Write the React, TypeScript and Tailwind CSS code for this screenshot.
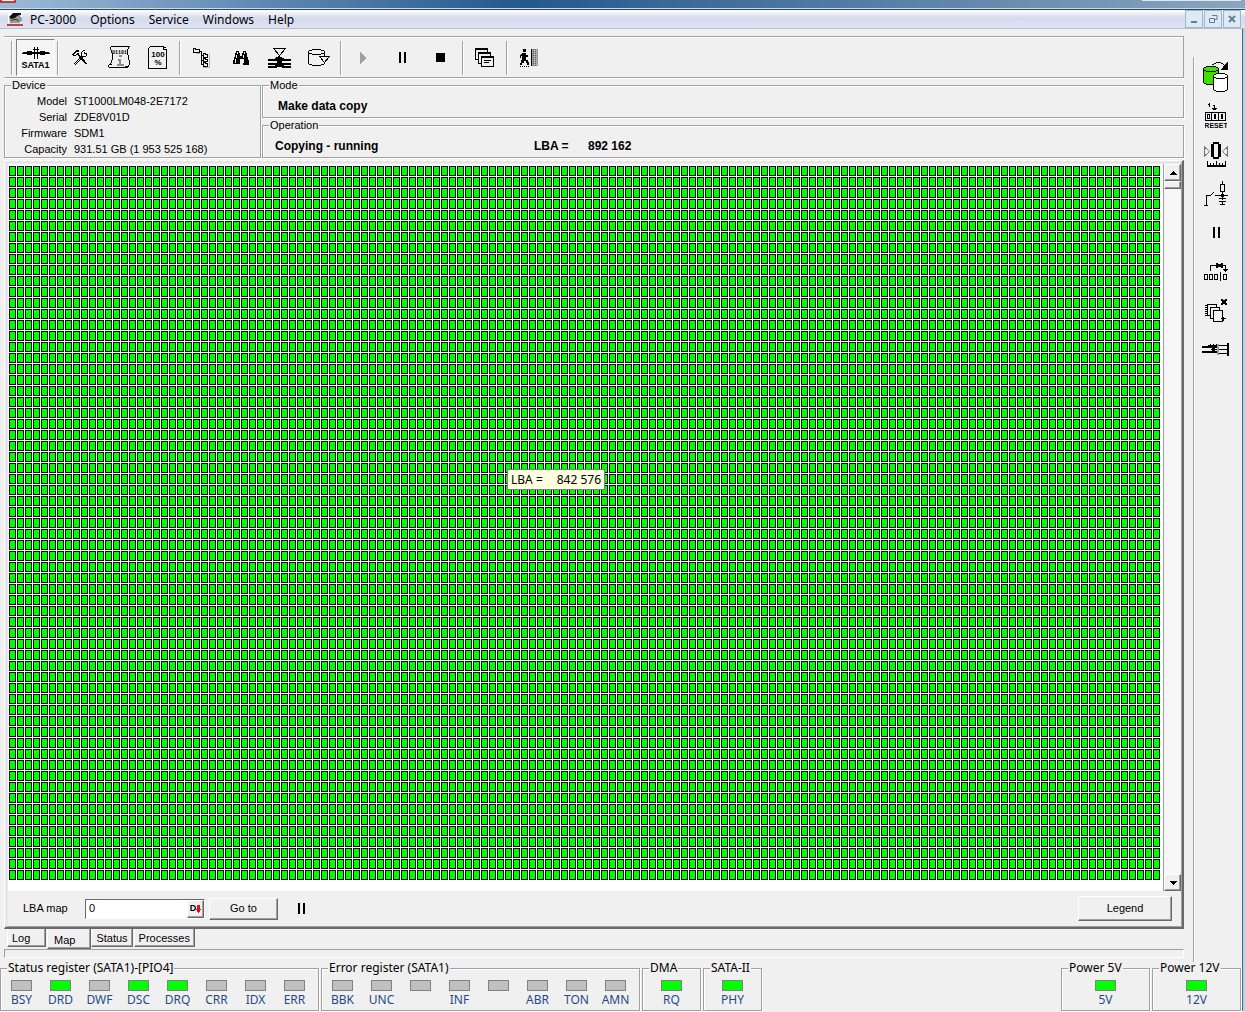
import { useState } from "react";
import type { ReactNode } from "react";

interface Led {
    label: string;
    on?: boolean;
}

const STATUS: Led[] = [
    { label: "BSY" },
    { label: "DRD", on: true },
    { label: "DWF" },
    { label: "DSC", on: true },
    { label: "DRQ", on: true },
    { label: "CRR" },
    { label: "IDX" },
    { label: "ERR" },
];

const ERRORS: Led[] = [
    { label: "BBK" },
    { label: "UNC" },
    { label: "" },
    { label: "INF" },
    { label: "" },
    { label: "ABR" },
    { label: "TON" },
    { label: "AMN" },
];

const DEVICE = [
    ["Model", "ST1000LM048-2E7172"],
    ["Serial", "ZDE8V01D"],
    ["Firmware", "SDM1"],
    ["Capacity", "931.51 GB (1 953 525 168)"],
];

function Icon({ w, h, children }: { w: number; h: number; children: ReactNode }) {
    return (
        <svg width={w} height={h} viewBox={`0 0 ${w} ${h}`} fill="none" stroke="#000" shapeRendering="crispEdges" aria-hidden="true">
            {children}
        </svg>
    );
}

const SataIcon = () => (
    <Icon w={28} h={12}>
        <path d="M0 6h28M5 4.5h5M18 4.5h5M5 7.5h5M18 7.5h5M12.5 0v12M15.5 0v12M11 2.5h6" />
        <path d="M1 5h26v2H1z" fill="#000" stroke="none" />
    </Icon>
);

const ToolsIcon = () => (
    <Icon w={16} h={16}>
        <path d="M5 4l9 10M6 4l9 10M10 6L2 14M11 7L3 15" />
        <path d="M0 4.5h2M1 3.5h2M2 2.5h2M3 1.5h4M4 .5h3M1 5.5h3M4 4.5h2M5 3.5h2" />
        <path d="M11 .5h2M10 1.5h1M9.5 2v4M10 6.5h4M14.5 4v2M12.5 2v2M13 3.5h2" />
    </Icon>
);

const ScrollIcon = () => (
    <Icon w={22} h={23}>
        <path d="M3 .5h19M2.5 1v3M3.5 4v3M4.5 7v7M3.5 14v3M2.5 17v2M20.5 1v2M19.5 3v6M20.5 9v5M21.5 14v5M20.5 19v2M1 21.5h19M.5 19v2M1 18.5h3M17 20.5h3" />
        <path d="M11 10h3M10 14h3M12 13v6M9 19h7" stroke="#8a8a8a" strokeWidth="2" />
        <text x="4" y="8" fontSize="5" stroke="none" fill="#000" className="font-['Liberation_Mono'] font-bold">01101</text>
    </Icon>
);

const PercentIcon = () => (
    <Icon w={20} h={23}>
        <path d="M2 .5h14M.5 2v20M0 22.5h19M18.5 3v19M1 1.5h1M16 1.5h2M15.5 1v3M15 3.5h3" />
        <text x="10" y="11" fontSize="8" textAnchor="middle" stroke="none" fill="#000" className="font-['Liberation_Sans'] font-bold">100</text>
        <text x="10" y="19" fontSize="8" textAnchor="middle" stroke="none" fill="#000" className="font-['Liberation_Sans'] font-bold">%</text>
    </Icon>
);

const TreeIcon = () => (
    <Icon w={17} h={20}>
        <path d="M16 6v14M10 19.5h6M3 5.5h4" stroke="#b0b0b0" />
        <path d="M.5 .5h2v1h4v3h-6zM7 3.5h2M8.5 3v14M9 7.5h1M9 12.5h1M9 16.5h1" />
        <path d="M10.5 5.5h2v1h2v3h-4zM10.5 10.5h2v1h2v2h-4zM10.5 14.5h2v1h2v3h-4z" />
    </Icon>
);

const BinocularsIcon = () => (
    <Icon w={16} h={14}>
        <path d="M3 0h3v2h1v3h2V2h1V0h3v2h1v4h1v3h1v5h-6V8H7v5H0V9h1V6h1V2h1z" fill="#000" stroke="none" />
        <path d="M4.5 1v2M3.5 4v3M2.5 8v4M11.5 1v2M10.5 4v3M10.5 8v4" stroke="#f0f0f0" />
    </Icon>
);

const StackIcon = () => (
    <Icon w={23} h={20}>
        <path d="M5.5 .5h12l-6 7z" />
        <path d="M11 8v3M8 9.5h6M0 12h9M14 12h9M0 15.5h23M0 18.5h9M14 18.5h9" strokeWidth="2" />
        <path d="M7 10h9v3H7zM9 13h5v3H9zM7 16h9v3H7z" fill="#000" stroke="none" />
    </Icon>
);

const DiskDropIcon = () => (
    <Icon w={22} h={18}>
        <path d="M4 .5h9M1 1.5h3M13 1.5h3M.5 2v13M16.5 2v6M1 4.5h3M13 4.5h3M4 5.5h9M1 15.5h3M4 16.5h9M13 15.5h3M16.5 13v2" />
        <path d="M11.5 7.5h10l-5 6z" fill="#f0f0f0" />
    </Icon>
);

const PlayIcon = () => (
    <Icon w={8} h={12}>
        <path d="M1 0l6 6-6 6z" fill="#a0a0a0" stroke="none" />
    </Icon>
);

const PauseIcon = () => (
    <Icon w={8} h={11}>
        <path d="M1 0h2v11H1zM6 0h2v11H6z" fill="#000" stroke="none" />
    </Icon>
);

const StopIcon = () => (
    <Icon w={9} h={9}>
        <path d="M0 0h9v9H0z" fill="#000" stroke="none" />
    </Icon>
);

const WindowsIcon = () => (
    <Icon w={20} h={20}>
        <path d="M.5 .5h12v11H.5z" fill="#f0f0f0" />
        <path d="M0 1h12" strokeWidth="2" />
        <path d="M3.5 4.5h12v11h-12z" fill="#f0f0f0" />
        <path d="M3 5h12" strokeWidth="2" />
        <path d="M6.5 8.5h12v10h-12z" fill="#f0f0f0" />
        <path d="M6 9h12" strokeWidth="2" />
        <path d="M9 12.5h7M9 14.5h5" />
    </Icon>
);

const ExitIcon = () => (
    <Icon w={20} h={18}>
        <path d="M4 0h3v3H4zM3 4h4v2h2v2H7v3h2v2h1v3H8v-2H7v-2H5v2H3v2H1v-2h1v-3h1V7H2v2H1V6h1V5h1z" fill="#000" stroke="none" />
        <path d="M1 17.5h9" strokeDasharray="1 1" />
        <path d="M13 0h6v17h-6z" fill="#9a9a9a" stroke="none" />
        <path d="M12.5 0v17" />
        <path d="M14.5 0v17M16.5 0v17" stroke="#666" strokeDasharray="1 1" />
        <path d="M15.5 1v16M17.5 1v16" stroke="#c8c8c8" strokeDasharray="1 1" />
    </Icon>
);

const CopyIcon = () => (
    <Icon w={26} h={32}>
        <path d="M.5 7.5l3-2h9l3 2v14l-3 2h-9l-3-2z" fill="#3ee000" />
        <path d="M.5 8.5l3 2h9l3-2" />
        <path d="M10.5 14.5l3-2h8l3 2v14l-3 2h-8l-3-2z" fill="#fff" />
        <path d="M10.5 15.5l3 2h8l3-2M9 3.5h2M11 2.5h2M13 1.5h5M18 2.5h2M20 3.5h1" />
        <path d="M25 1v8h-8l3-3v-1z" fill="#000" stroke="none" />
    </Icon>
);

const ResetIcon = () => (
    <Icon w={22} h={28}>
        <path d="M3 2.5h1M4.5 1v4M8 3.5h2M9.5 3v5M7 6.5h5M8 7.5h3M0 10.5h21M0 18.5h21M.5 10v9M6.5 10v9M13.5 10v9M20.5 10v9" />
        <path d="M2.5 12.5h2v4h-2zM9.5 12.5h1v4h-1zM16.5 12.5h1v4h-1z" />
        <text x="11" y="26" fontSize="7" textAnchor="middle" stroke="none" fill="#000" className="font-['Liberation_Sans'] font-bold">RESET</text>
    </Icon>
);

const ZeroIcon = () => (
    <Icon w={24} h={27}>
        <path d="M.5 6v9l5-4.5zM23.5 6v9l-5-4.5z" stroke="#777" />
        <path d="M9 1h6v2h2v13h-2v2H9v-2H7V3h2zM10 3v13h4V3z" fill="#000" fillRule="evenodd" stroke="none" />
        <path d="M3 25h19" strokeWidth="2" />
        <path d="M3.5 20v5M6.5 22v3M9.5 22v3M12.5 20v5M15.5 22v3M18.5 22v3M21.5 20v5" />
    </Icon>
);

const PowerIcon = () => (
    <Icon w={24} h={26}>
        <path d="M18.5 0v3M16.5 3.5h4v7h-4zM18.5 11v8M11 14.5h13M15 17.5h7M15 20.5h7M18.5 21v2M16 23.5h5M0 24.5h4M2.5 24V14.5h4M7 13.5h1M8 12.5h1M9 11.5h1" />
        <path d="M17 13h3v3h-3z" fill="#000" stroke="none" />
    </Icon>
);

const SkipIcon = () => (
    <Icon w={24} h={20}>
        <path d="M6.5 9V3.5h15V10M19 7.5h5M20 8.5h3M.5 12.5h3v5h-3zM5.5 12.5h3v5h-3zM10.5 12.5h3v5h-3zM16.5 10v9M19.5 12.5h3v5h-3z" />
        <path d="M12 1h2v1h3V1h2v2h-2v1h2v2h-2V5h-3v1h-2V4h2V3h-2z" fill="#000" stroke="none" />
    </Icon>
);

const ChipsIcon = () => (
    <Icon w={23} h={24}>
        <path d="M2.5 5.5h9v11h-9z" fill="#f0f0f0" />
        <path d="M0 6.5h3M0 8.5h3M0 10.5h3M0 12.5h3M0 14.5h3M0 16.5h3" />
        <path d="M5.5 8.5h9v11h-9z" fill="#f0f0f0" />
        <path d="M8.5 11.5h9v11h-9z" fill="#f0f0f0" />
        <path d="M16 19.5h5M18.5 18v4" />
        <path d="M16 0h2v1h2V0h2v2h-1v2h1v2h-2V5h-2v1h-2V4h1V2h-1z" fill="#000" stroke="none" />
    </Icon>
);

const PlugIcon = () => (
    <Icon w={28} h={13}>
        <path d="M0 4h15M0 9h15" strokeWidth="2" />
        <path d="M6 2.5h10M8.5 1v2M11.5 1v2M14.5 1v2M9 6.5h7" />
        <path d="M10 4h3v6h-3z" fill="#000" stroke="none" />
        <path d="M16 1v11" stroke="#999" strokeWidth="2" />
        <path d="M17 2.5h8M17 6.5h8M17 10.5h8" />
        <path d="M25 0h2v13h-2z" fill="#000" stroke="none" />
    </Icon>
);

const SIDE = [
    { name: "Copy", icon: <CopyIcon /> },
    { name: "Reset", icon: <ResetIcon /> },
    { name: "Recalibrate", icon: <ZeroIcon /> },
    { name: "Power", icon: <PowerIcon /> },
    { name: "Pause", icon: <PauseIcon /> },
    { name: "Skip", icon: <SkipIcon /> },
    { name: "Chips", icon: <ChipsIcon /> },
    { name: "Connector", icon: <PlugIcon /> },
];

function ToolButton({ name, children }: { name: string; children: ReactNode }) {
    return (
        <button type="button" aria-label={name} className="flex h-[39px] w-[39px] shrink-0 items-center justify-center">
            {children}
        </button>
    );
}

const Separator = () => <div className="mx-[2px] h-[34px] w-px bg-[#a0a0a0] shadow-[1px_0_0_#fff]" />;

function Group({ title, className, children }: { title: string; className: string; children: ReactNode }) {
    return (
        <fieldset className={`min-w-0 border border-[#a0a0a0] shadow-[1px_1px_0_#fff,inset_1px_1px_0_#fff] ${className}`}>
            <legend className="ml-[6px] bg-[#f0f0f0] px-px leading-3 whitespace-nowrap">{title}</legend>
            {children}
        </fieldset>
    );
}

function LedGroup({ title, leds, className = "" }: { title: string; leds: Led[]; className?: string }) {
    return (
        <Group title={title} className={`h-[49px] font-['Noto_Sans',sans-serif] text-xs ${className}`}>
            <div className={`flex pt-[6px] ${leds.length > 1 ? "pl-px" : "justify-center"}`}>
                {leds.map((led, i) => (
                    <div key={i} className="flex w-[39px] flex-col items-center">
                        <span className={`h-[11px] w-[21px] border border-[#808080] ${led.on ? "bg-[#00ff00]" : "bg-[#c0c0c0]"}`} />
                        <span className="mt-px leading-4 text-[#1f4b85]">{led.label}</span>
                    </div>
                ))}
            </div>
        </Group>
    );
}

const raised = "border border-t-white border-l-white border-r-[#696969] border-b-[#696969] bg-[#f0f0f0] shadow-[inset_-1px_-1px_0_#a0a0a0]";

const windowEdge = "border-r-2 border-[#b4d0ec] pr-[2px] shadow-[inset_-1px_0_0_#50647c]";

export default function App() {
    const [lba, setLba] = useState("0");
    const [tab, setTab] = useState("Map");

    return (
        <div className="flex min-h-screen flex-col bg-[#f0f0f0] font-['Liberation_Sans',sans-serif] text-[11px] text-black">
            <div className="flex h-[10px] items-start justify-between border-b border-[#2c4660] bg-linear-to-r from-[#9dbbd6] via-[#24588f] via-42% to-[#8ba6bd] shadow-[inset_0_-1px_0_#c8dcec]">
                <div className="h-[3px] w-4 border-2 border-t-0 border-[#c43a3a] bg-white" />
                <div className="mr-1 h-px w-[99px] bg-[#dce9f4]" />
            </div>
            <header className="flex h-[19px] items-center border-b border-[#b8bcd0] bg-linear-to-b from-white via-[#d5dbec] via-45% to-[#e0e5f5] pr-1 pl-[7px] font-['Noto_Sans',sans-serif] text-xs">
                <svg width="16" height="16" viewBox="0 0 16 16" aria-hidden="true">
                    <path d="M1 2h14v10H1z" fill="#fff" />
                    <path d="M2 8l3-3h8l2 2v3l-3 2H3z" fill="#999" />
                    <path d="M2 6l4-4h8v2l-4 1-2 2-4 1z" fill="#111" />
                    <path d="M4 10c2-2 6-2 8 0" stroke="#333" fill="none" />
                    <path d="M0 13h16v2H0z" fill="#c04048" />
                </svg>
                <nav className="mt-[2px] ml-[7px] flex gap-[14px]">
                    {["PC-3000", "Options", "Service", "Windows", "Help"].map((item) => (
                        <button key={item} type="button">{item}</button>
                    ))}
                </nav>
                <div className="ml-auto flex gap-px">
                    {["M5 11h6", "M7 4.5h5v4h-2M4.5 7.5h5v4h-5z", "M5 5l6 6M11 5l-6 6"].map((d, i) => (
                        <button key={d} type="button" aria-label={["Minimize", "Restore", "Close"][i]} className="border border-[#a3b5c6] bg-[#dceaf6]">
                            <svg width="16" height="16" viewBox="0 0 16 16">
                                <path d={d} fill="none" stroke="#6a7d90" strokeWidth={i === 1 ? 1 : 2} />
                            </svg>
                        </button>
                    ))}
                </div>
            </header>

            <div className={`flex ${windowEdge}`}>
                <main className="ml-1 min-w-0 flex-1 pt-[7px]">
                    <div className="flex h-[42px] items-center border border-[#a0a0a0] border-l-transparent pt-px pl-1 shadow-[0_1px_0_#fff,inset_0_1px_0_#fff]">
                        <Separator />
                        <button type="button" aria-pressed="true" className="ml-[2px] flex h-[37px] w-[39px] flex-col items-center justify-center border border-t-[#808080] border-r-white border-b-white border-l-[#808080] bg-[#f5f5f5] pt-[2px]">
                            <SataIcon />
                            <span className="mt-px text-[9px] leading-[10px] font-bold">SATA1</span>
                        </button>
                        <Separator />
                        <ToolButton name="Settings"><ToolsIcon /></ToolButton>
                        <ToolButton name="Information"><ScrollIcon /></ToolButton>
                        <ToolButton name="Test"><PercentIcon /></ToolButton>
                        <Separator />
                        <ToolButton name="Tree"><TreeIcon /></ToolButton>
                        <ToolButton name="Find"><BinocularsIcon /></ToolButton>
                        <ToolButton name="Heads"><StackIcon /></ToolButton>
                        <ToolButton name="Export"><DiskDropIcon /></ToolButton>
                        <Separator />
                        <ToolButton name="Start"><PlayIcon /></ToolButton>
                        <ToolButton name="Pause"><PauseIcon /></ToolButton>
                        <ToolButton name="Stop"><StopIcon /></ToolButton>
                        <Separator />
                        <ToolButton name="Windows"><WindowsIcon /></ToolButton>
                        <Separator />
                        <ToolButton name="Exit"><ExitIcon /></ToolButton>
                    </div>

                    <div className="mt-px flex gap-px">
                        <Group title="Device" className="w-[257px]">
                            <dl className="pt-[2px] leading-4">
                                {DEVICE.map(([key, value]) => (
                                    <div key={key} className="flex gap-[7px]">
                                        <dt className="w-[62px] text-right">{key}</dt>
                                        <dd>{value}</dd>
                                    </div>
                                ))}
                            </dl>
                        </Group>
                        <div className="flex flex-1 flex-col gap-px">
                            <Group title="Mode" className="h-[39px]">
                                <p className="pt-[7px] pl-[15px] text-xs leading-4 font-bold">Make data copy</p>
                            </Group>
                            <Group title="Operation" className="h-[39px]">
                                <p className="flex pt-[7px] pl-3 text-xs leading-4 font-bold">
                                    <span className="w-[259px]">Copying - running</span>
                                    <span className="w-[54px]">LBA =</span>
                                    <span>892 162</span>
                                </p>
                            </Group>
                        </div>
                    </div>

                    <section className="mt-[2px] border border-r-2 border-b-2 border-t-white border-r-[#696969] border-b-[#696969] border-l-white">
                        <div className="border-t-[3px] border-r border-b border-l-[3px] border-t-[#e6e6e6] border-r-[#a0a0a0] border-b-[#a0a0a0] border-l-[#e6e6e6]">
                            <div className="relative flex gap-[3px] bg-white">
                                <svg className="mt-[2px] mb-[10px] ml-px h-[715px] min-w-0 flex-1" role="img" aria-label="LBA map">
                                    <defs>
                                        <pattern id="cell" width="8" height="11" patternUnits="userSpaceOnUse">
                                            <rect width="7" height="10" fill="#000" />
                                            <rect x="1" y="1" width="5" height="8" fill="#00ff00" />
                                        </pattern>
                                    </defs>
                                    <rect width="100%" height="100%" fill="url(#cell)" />
                                </svg>
                                <div className="flex w-[18px] flex-col border-l border-[#a0a0a0] bg-[repeating-conic-gradient(#fff_0_25%,#f0f0f0_0_50%)] bg-size-[2px_2px]">
                                    <button type="button" aria-label="Scroll up" className={`flex h-[17px] items-center justify-center ${raised}`}>
                                        <svg width="8" height="4" shapeRendering="crispEdges"><path d="M0 4l4-4 4 4z" /></svg>
                                    </button>
                                    <div className={`h-2 ${raised}`} />
                                    <button type="button" aria-label="Scroll down" className={`mt-auto flex h-[17px] items-center justify-center ${raised}`}>
                                        <svg width="8" height="4" shapeRendering="crispEdges"><path d="M0 0l4 4 4-4z" /></svg>
                                    </button>
                                </div>
                                <div className="absolute top-[305px] left-[499px] flex h-[21px] items-center gap-[14px] border border-[#808080] bg-[#ffffe1] px-[3px] font-['Noto_Sans',sans-serif] text-xs whitespace-nowrap">
                                    <span>LBA =</span>
                                    <span>842 576</span>
                                </div>
                            </div>
                            <div className="flex h-[35px] items-center pr-[9px] pl-[15px]">
                                <label htmlFor="lba" className="w-[62px]">LBA map</label>
                                <div className="flex h-[20px] w-[120px] border border-t-[#696969] border-r-white border-b-white border-l-[#696969] bg-white">
                                    <input id="lba" value={lba} onChange={(e) => setLba(e.target.value)} className="min-w-0 flex-1 pl-[3px] outline-none" />
                                    <button type="button" aria-label="Decimal" className={`flex w-[17px] items-center justify-center text-[9px] font-bold ${raised}`}>
                                        D
                                        <svg width="5" height="8" className="shrink-0" shapeRendering="crispEdges"><path d="M1 0h3v4h1l-2 4h-1l-2-4h1z" fill="#e01010" /></svg>
                                    </button>
                                </div>
                                <button type="button" className={`ml-1 h-[22px] w-[69px] ${raised}`}>Go to</button>
                                <button type="button" aria-label="Pause map" className="ml-[19px]"><PauseIcon /></button>
                                <button type="button" className={`ml-auto h-[25px] w-[94px] ${raised}`}>Legend</button>
                            </div>
                        </div>
                    </section>

                    <div role="tablist" className="flex h-[20px] items-start pl-[3px]">
                        {["Log", "Map", "Status", "Processes"].map((name) => (
                            <button
                                key={name}
                                type="button"
                                role="tab"
                                aria-selected={tab === name}
                                onClick={() => setTab(name)}
                                className={`border border-t-0 border-l-white border-r-[#696969] border-b-[#696969] shadow-[inset_-1px_-1px_0_#a0a0a0] ${tab === name ? "h-[20px] pt-[3px] pr-[15px] pl-[6px]" : "mr-px h-[18px] px-1 pt-px"} ${name === "Log" ? "w-[39px] text-left" : ""}`}
                            >
                                {name}
                            </button>
                        ))}
                    </div>
                    <div className="h-[9px] border border-[#a0a0a0] border-r-white border-b-white" />
                </main>

                <aside className="mt-[28px] mb-[-4px] ml-[9px] flex w-12 flex-col items-center border-l border-[#a0a0a0] pr-[3px] shadow-[inset_1px_0_0_#fff]">
                    {SIDE.map((s) => (
                        <ToolButton key={s.name} name={s.name}>{s.icon}</ToolButton>
                    ))}
                </aside>
            </div>

            <footer className={`flex gap-[2px] pt-1 ${windowEdge}`}>
                <LedGroup title="Status register (SATA1)-[PIO4]" leds={STATUS} className="w-[319px]" />
                <LedGroup title="Error register (SATA1)" leds={ERRORS} className="w-[319px]" />
                <LedGroup title="DMA" leds={[{ label: "RQ", on: true }]} className="w-[59px]" />
                <LedGroup title="SATA-II" leds={[{ label: "PHY", on: true }]} className="w-[59px]" />
                <LedGroup title="Power 5V" leds={[{ label: "5V", on: true }]} className="ml-auto w-[89px]" />
                <LedGroup title="Power 12V" leds={[{ label: "12V", on: true }]} className="w-[89px]" />
            </footer>
        </div>
    );
}
